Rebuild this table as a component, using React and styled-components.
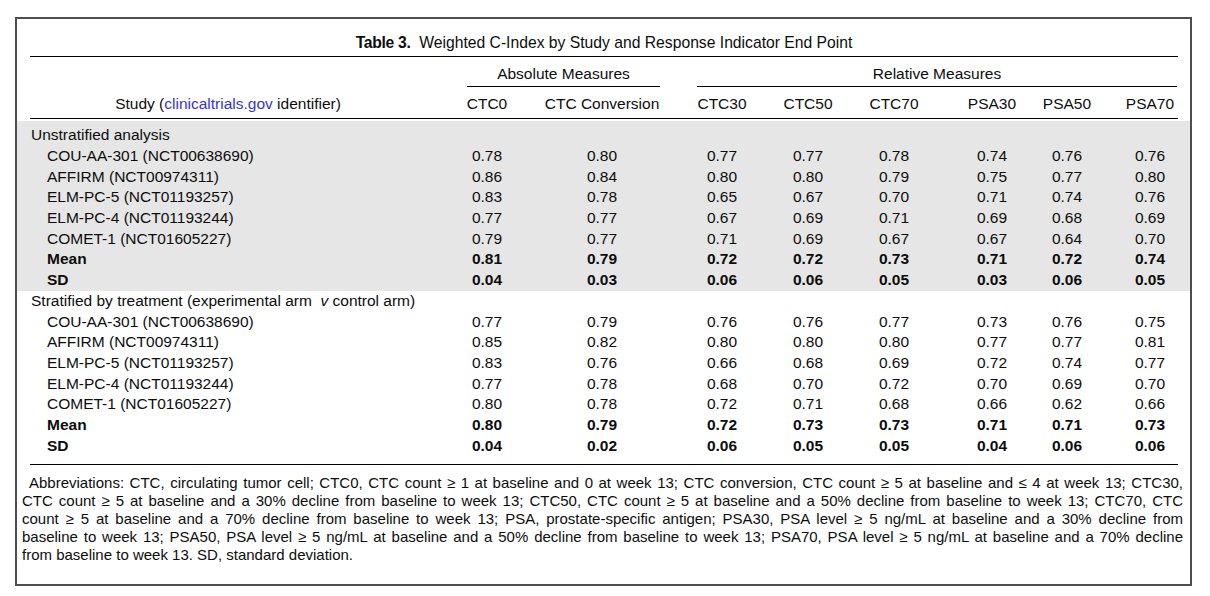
import styled, { createGlobalStyle } from "styled-components"

const GlobalStyle = createGlobalStyle`
  body {
    margin: 0;
    background: #ffffff;
    color: #0d0d0d;
    font-family: "Liberation Sans", Arial, Helvetica, sans-serif;
  }
`

const COLUMNS = "410px 94px 136px 104px 68px 104px 92px 58px 82px"

const Page = styled.div`
  padding: 17px 0 0 15px;
`

const Box = styled.div`
  box-sizing: border-box;
  width: 1177px;
  height: 569px;
  border: 2px solid #4d4d4d;
`

const Inset = styled.div`
  padding: 0 12px 0 13px;
`

const Title = styled.div`
  margin-top: 14px;
  padding-bottom: 3px;
  border-bottom: 1px solid #000;
  font-size: 15.7px;
  line-height: 20px;
  text-align: center;

  b {
    letter-spacing: -0.3px;
  }
`

const Cell = styled.div`
  text-align: center;
  padding-left: ${p => (p.$shift ? "26px" : "0")};
`

const Row = styled.div`
  display: grid;
  grid-template-columns: ${COLUMNS};
  height: 20.7px;
  align-items: center;
  font-size: 15.5px;
  line-height: 20px;
  font-weight: ${p => (p.$bold ? "bold" : "normal")};
  white-space: nowrap;
`

const SpanRow = styled.div`
  display: grid;
  grid-template-columns: ${COLUMNS};
  padding-top: 7px;
  font-size: 15.5px;
  line-height: 20px;
`

const Spanner = styled.div`
  grid-column: ${p => p.$cols};
  margin: ${p => p.$margin};
  padding-bottom: 2px;
  border-bottom: 1px solid #000;
  text-align: center;
`

const HeadRow = styled(Row)`
  height: auto;
  margin-top: 7px;
  padding-bottom: 4px;
  border-bottom: 1px solid #000;
  margin-bottom: 2px;
`

const StudyHead = styled.div`
  text-align: center;
  padding-right: 14px;
`

const Link = styled.span`
  color: #3535d0;
`

const Label = styled.div`
  padding-left: ${p => (p.$group ? "1px" : "17px")};
`

const Band = styled.div`
  background: ${p => (p.$shaded ? "#e6e6e6" : "transparent")};
  padding-top: ${p => (p.$shaded ? "4px" : "0")};
`

const BottomRule = styled.div`
  margin-top: 8px;
  border-top: 1px solid #000;
`

const Notes = styled.div`
  padding: 9px 7px 0 5px;
  font-size: 15px;
  line-height: 18.1px;
`

const NoteLine = styled.div`
  white-space: nowrap;
  text-align: ${p => (p.$last ? "left" : "justify")};
  text-align-last: ${p => (p.$last ? "left" : "justify")};
  text-indent: ${p => (p.$first ? "7px" : "0")};
`

const HEADS = ["CTC0", "CTC Conversion", "CTC30", "CTC50", "CTC70", "PSA30", "PSA50", "PSA70"]

const SECTIONS = [
  {
    title: "Unstratified analysis",
    shaded: true,
    rows: [
      ["COU-AA-301 (NCT00638690)", "0.78 0.80 0.77 0.77 0.78 0.74 0.76 0.76"],
      ["AFFIRM (NCT00974311)", "0.86 0.84 0.80 0.80 0.79 0.75 0.77 0.80"],
      ["ELM-PC-5 (NCT01193257)", "0.83 0.78 0.65 0.67 0.70 0.71 0.74 0.76"],
      ["ELM-PC-4 (NCT01193244)", "0.77 0.77 0.67 0.69 0.71 0.69 0.68 0.69"],
      ["COMET-1 (NCT01605227)", "0.79 0.77 0.71 0.69 0.67 0.67 0.64 0.70"],
      ["Mean", "0.81 0.79 0.72 0.72 0.73 0.71 0.72 0.74", true],
      ["SD", "0.04 0.03 0.06 0.06 0.05 0.03 0.06 0.05", true],
    ],
  },
  {
    title: (
      <>
        Stratified by treatment (experimental arm&nbsp; <i>v</i> control arm)
      </>
    ),
    rows: [
      ["COU-AA-301 (NCT00638690)", "0.77 0.79 0.76 0.76 0.77 0.73 0.76 0.75"],
      ["AFFIRM (NCT00974311)", "0.85 0.82 0.80 0.80 0.80 0.77 0.77 0.81"],
      ["ELM-PC-5 (NCT01193257)", "0.83 0.76 0.66 0.68 0.69 0.72 0.74 0.77"],
      ["ELM-PC-4 (NCT01193244)", "0.77 0.78 0.68 0.70 0.72 0.70 0.69 0.70"],
      ["COMET-1 (NCT01605227)", "0.80 0.78 0.72 0.71 0.68 0.66 0.62 0.66"],
      ["Mean", "0.80 0.79 0.72 0.73 0.73 0.71 0.71 0.73", true],
      ["SD", "0.04 0.02 0.06 0.05 0.05 0.04 0.06 0.06", true],
    ],
  },
]

const NOTES = [
  "Abbreviations: CTC, circulating tumor cell; CTC0, CTC count ≥ 1 at baseline and 0 at week 13; CTC conversion, CTC count ≥ 5 at baseline and ≤ 4 at week 13; CTC30,",
  "CTC count ≥ 5 at baseline and a 30% decline from baseline to week 13; CTC50, CTC count ≥ 5 at baseline and a 50% decline from baseline to week 13; CTC70, CTC",
  "count ≥ 5 at baseline and a 70% decline from baseline to week 13; PSA, prostate-specific antigen; PSA30, PSA level ≥ 5 ng/mL at baseline and a 30% decline from",
  "baseline to week 13; PSA50, PSA level ≥ 5 ng/mL at baseline and a 50% decline from baseline to week 13; PSA70, PSA level ≥ 5 ng/mL at baseline and a 70% decline",
  "from baseline to week 13. SD, standard deviation.",
]

const Section = ({ section }) => (
  <Band $shaded={section.shaded}>
    <Inset>
      <Row>
        <Label $group>{section.title}</Label>
      </Row>
      {section.rows.map(([name, values, bold]) => (
        <Row key={name} $bold={bold}>
          <Label>{name}</Label>
          {values.split(" ").map((v, i, all) => (
            <Cell key={i} $shift={i === all.length - 1}>
              {v}
            </Cell>
          ))}
        </Row>
      ))}
    </Inset>
  </Band>
)

export default function App() {
  return (
    <Page>
      <GlobalStyle />
      <Box>
        <Inset>
          <Title>
            <b>Table 3.</b>&nbsp; Weighted C-Index by Study and Response Indicator End Point
          </Title>
          <SpanRow>
            <Spanner $cols="2 / span 2" $margin="0 10px 0 27px">Absolute Measures</Spanner>
            <Spanner $cols="4 / span 6" $margin="0 1px 0 27px">Relative Measures</Spanner>
          </SpanRow>
          <HeadRow>
            <StudyHead>
              Study (<Link>clinicaltrials.gov</Link> identifier)
            </StudyHead>
            {HEADS.map((h, i) => (
              <Cell key={h} $shift={i === HEADS.length - 1}>
                {h}
              </Cell>
            ))}
          </HeadRow>
        </Inset>
        {SECTIONS.map((s, i) => (
          <Section key={i} section={s} />
        ))}
        <Inset>
          <BottomRule />
        </Inset>
        <Notes>
          {NOTES.map((line, i) => (
            <NoteLine key={i} $first={i === 0} $last={i === NOTES.length - 1}>
              {line}
            </NoteLine>
          ))}
        </Notes>
      </Box>
    </Page>
  )
}
